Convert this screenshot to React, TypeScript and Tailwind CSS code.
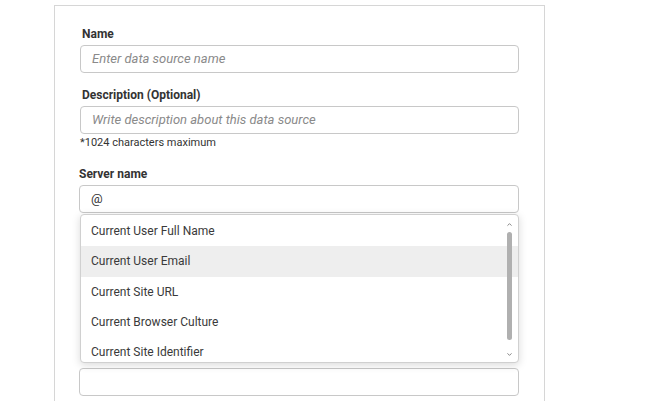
import { ChevronUp, ChevronDown } from "lucide-react";

const variables = [
  "Current User Full Name",
  "Current User Email",
  "Current Site URL",
  "Current Browser Culture",
  "Current Site Identifier",
];

function Field({ label, placeholder, value, indent }: { label: string; placeholder?: string; value?: string; indent?: boolean }) {
  return (
    <div>
      <label className={`block text-[12px] font-bold text-[#333] leading-[14px] mb-[4px] ${indent ? "pl-[2px]" : ""}`}>
        {label}
      </label>
      <div className="h-[28px] border border-[#c8c8c8] rounded-[4px] flex items-center px-[11px] text-[13px]">
        {value ? (
          <span className="text-[#333]">{value}</span>
        ) : (
          <span className="italic text-[#8a8a8a]">{placeholder}</span>
        )}
      </div>
    </div>
  );
}

export default function App() {
  const active = 1;
  return (
    <div className="w-[659px] h-[401px] bg-white overflow-hidden font-['Roboto',sans-serif]">
      <div className="ml-[54px] mt-[5px] w-[491px] h-[420px] border border-[#d6d6d6] pl-[25px] pr-[25px] pt-[21px]">
        <Field label="Name" placeholder="Enter data source name" indent />
        <div className="mt-[15px]">
          <Field label="Description (Optional)" placeholder="Write description about this data source" indent />
          <p className="text-[11px] text-[#333] mt-[2px] leading-[13px]">*1024 characters maximum</p>
        </div>
        <div className="mt-[18px] -ml-[1px] relative">
          <Field label="Server name" value="@" />
          <div className="absolute left-[1px] right-0 top-[47px] h-[149px] bg-white border border-[#d0d0d0] rounded-[4px] shadow-[0_2px_8px_rgba(0,0,0,0.15)] overflow-hidden z-10">
            <ul className="pt-[1px]">
              {variables.map((v, i) => (
                <li
                  key={v}
                  className={`h-[30.25px] flex items-center pl-[10px] text-[12px] text-[#3a3a3a] ${
                    i === active ? "bg-[#eeeeee]" : ""
                  }`}
                >
                  {v}
                </li>
              ))}
            </ul>
            <div className="absolute right-[3px] top-0 bottom-0 w-[12px] flex flex-col items-center pt-[6px] pb-[4px]">
              <ChevronUp className="w-[7px] h-[7px] text-[#777]" strokeWidth={3} />
              <div className="w-[5px] h-[108px] bg-[#b0b0b0] rounded-[3px] mt-[4px]" />
              <div className="flex-1" />
              <ChevronDown className="w-[7px] h-[7px] text-[#777]" strokeWidth={3} />
            </div>
          </div>
          <div className="mt-[155px] h-[28px] border border-[#c8c8c8] rounded-[4px]" />
        </div>
      </div>
    </div>
  );
}
